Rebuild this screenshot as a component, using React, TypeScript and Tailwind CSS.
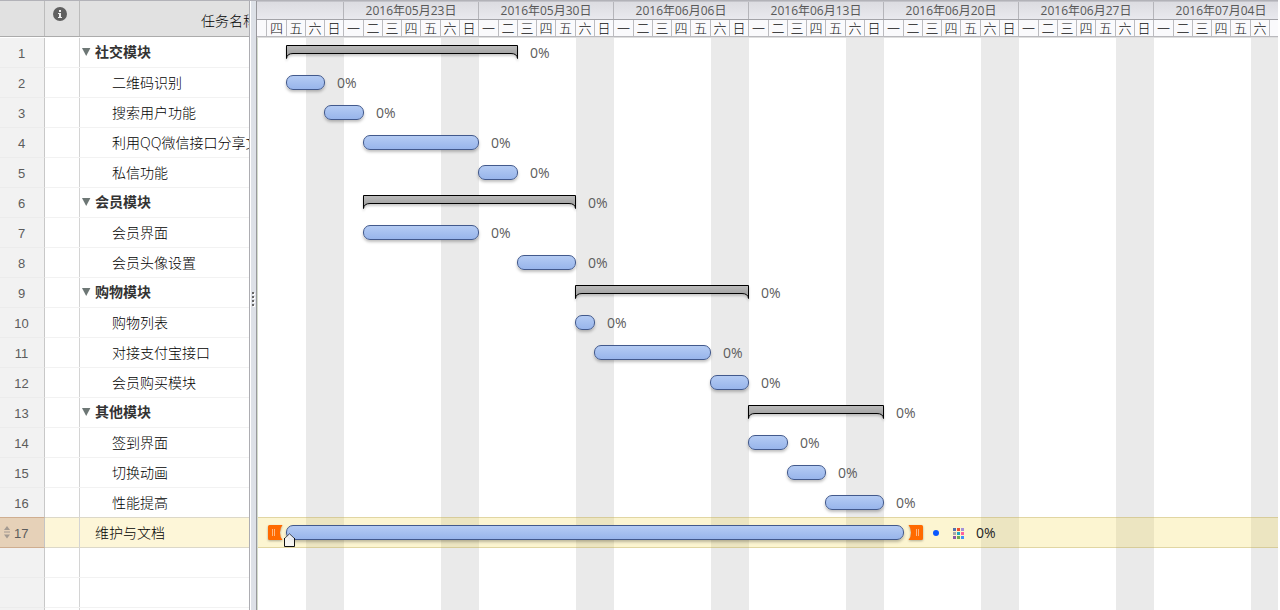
import React from 'react';

type Task = { name: string; kind: 'group' | 'task' | 'selected'; start: number; end: number };

const CHART_LEFT = 257;

const tasks: Task[] = [
  { name: '社交模块', kind: 'group', start: 286, end: 518 },
  { name: '二维码识别', kind: 'task', start: 286, end: 325 },
  { name: '搜索用户功能', kind: 'task', start: 324, end: 364 },
  { name: '利用QQ微信接口分享文章', kind: 'task', start: 363, end: 479 },
  { name: '私信功能', kind: 'task', start: 478, end: 518 },
  { name: '会员模块', kind: 'group', start: 363, end: 576 },
  { name: '会员界面', kind: 'task', start: 363, end: 479 },
  { name: '会员头像设置', kind: 'task', start: 517, end: 576 },
  { name: '购物模块', kind: 'group', start: 575, end: 749 },
  { name: '购物列表', kind: 'task', start: 575, end: 595 },
  { name: '对接支付宝接口', kind: 'task', start: 594, end: 711 },
  { name: '会员购买模块', kind: 'task', start: 710, end: 749 },
  { name: '其他模块', kind: 'group', start: 748, end: 884 },
  { name: '签到界面', kind: 'task', start: 748, end: 788 },
  { name: '切换动画', kind: 'task', start: 787, end: 826 },
  { name: '性能提高', kind: 'task', start: 825, end: 884 },
  { name: '维护与文档', kind: 'selected', start: 286, end: 904 },
];

const weeks = ['05月23日', '05月30日', '06月06日', '06月13日', '06月20日', '06月27日', '07月04日'];
const dayNames = ['一', '二', '三', '四', '五', '六', '日'];
const dayWidths = [20, 19, 19, 19, 20, 19, 19];

const days: { label: string; width: number }[] = [
  { label: '', width: 10 },
  { label: '四', width: 20 },
  { label: '五', width: 19 },
  { label: '六', width: 19 },
  { label: '日', width: 19 },
  ...weeks.flatMap(() => dayNames.map((label, i) => ({ label, width: dayWidths[i] }))).slice(0, -1),
];

function SummaryBar({ width }: { width: number }) {
  return (
    <svg width={width} height="16" className="mt-[7px] block shrink-0 overflow-visible drop-shadow-[0_2px_1px_rgba(0,0,0,0.2)]">
      <defs>
        <linearGradient id="summary" x1="0" x2="0" y1="0" y2="1">
          <stop offset="0" stopColor="#bcbcbc" />
          <stop offset="1" stopColor="#979797" />
        </linearGradient>
      </defs>
      <path
        d={`M.5 13.5V.5H${width - 0.5}V13.5Q${width - 1} 8.5 ${width - 7} 8.5H7Q1 8.5 .5 13.5Z`}
        fill="url(#summary)"
        stroke="#000"
      />
    </svg>
  );
}

function TaskBar({ width }: { width: number }) {
  return (
    <div
      className="mt-[7px] h-[15px] shrink-0 rounded-[7px] border border-[#42598c] bg-linear-to-b from-[#b4cbf3] to-[#98b5eb] shadow-[0_2px_3px_rgba(0,0,0,0.25)]"
      style={{ width }}
    />
  );
}

function Handle({ right }: { right?: boolean }) {
  return (
    <svg width="15" height="16" viewBox="0 0 15 16" className={right ? 'mt-[7px] shrink-0 -scale-x-100 drop-shadow-[0_1px_1px_rgba(0,0,0,0.3)]' : 'mt-[7px] shrink-0 drop-shadow-[0_1px_1px_rgba(0,0,0,0.3)]'}>
      <path d="M1.5 0H14.5Q12 3 12 7.5T14.5 15H1.5Q0 15 0 13.5V1.5Q0 0 1.5 0Z" fill="#ff6a00" />
      <path d="M4.5 4V11M6.5 4V11" stroke="#ffb680" />
    </svg>
  );
}

const dots = ['#5470b0', '#ef4e2e', '#a391d8', '#a9a9a9', '#24a6c4', '#ff609c', '#8b59a8', '#70a850', '#4290f8'];

function ColourGrid() {
  return (
    <div className="mt-[10px] grid h-[11px] w-[11px] shrink-0 grid-cols-3 gap-px">
      {dots.map((c) => (
        <i key={c} className="block h-[3px] w-[3px]" style={{ backgroundColor: c }} />
      ))}
    </div>
  );
}

function ChartRow({ task }: { task: Task }) {
  const width = task.end - task.start;
  const offset = task.start - CHART_LEFT;
  if (task.kind === 'selected') {
    return (
      <div className="relative -mt-px flex h-[31px] items-start border-y border-[#b8a75e]/40 bg-[#f2d53f]/24 pl-[11px]">
        <Handle />
        <div className="w-[3px] shrink-0" />
        <TaskBar width={width} />
        <svg width="12" height="15" className="absolute top-[15px] left-[27px]">
          <path d="M.5 13.5V5.5L5.5 .8L10.5 5.5V13.5Z" fill="#f5f5f5" fillOpacity=".9" />
          <path d="M.5 5.5L5.5 .8L10.5 5.5" fill="none" stroke="#111" strokeOpacity=".7" />
          <path d="M.5 5V13.5H10.5V5" fill="none" stroke="#111" />
        </svg>
        <div className="w-[4px] shrink-0" />
        <Handle right />
        <div className="mt-[12px] ml-[10px] h-[6px] w-[6px] shrink-0 rounded-full bg-[#0a58ff]" />
        <div className="ml-[14px]">
          <ColourGrid />
        </div>
        <span className="ml-[12px] text-[14px] leading-[30px] text-[#222]">0%</span>
      </div>
    );
  }
  return (
    <div className="flex h-[30px] items-start" style={{ paddingLeft: offset }}>
      {task.kind === 'group' ? <SummaryBar width={width} /> : <TaskBar width={width} />}
      <span className="ml-[12px] text-[14px] leading-[30px] text-[#5c5c5c]">0%</span>
    </div>
  );
}

function TableRow({ task, index }: { task?: Task; index?: number }) {
  const selected = task?.kind === 'selected';
  return (
    <div
      className={
        selected
          ? '-mt-px flex h-[31px] shrink-0 border-y border-[#dcd8c8] bg-[#fdf6d8]'
          : 'flex h-[30px] shrink-0 border-b border-[#f2f2f2]'
      }
    >
      <div
        className={
          selected
            ? '-my-px flex w-[45px] shrink-0 items-center border-y border-r border-y-[#cfae90] border-r-[#c4c4c4] bg-[#e6d1b8] pl-[4px]'
            : '-mb-px flex w-[45px] shrink-0 items-center justify-center border-r border-b border-r-[#c8c8c8] border-b-[#ececec] bg-[#f2f2f2] pr-px'
        }
      >
        {selected && (
          <svg width="7" height="13" className="mr-[3px]" fill="#a39a91">
            <path d="M3 0L6 4H0ZM0 5.5H6V6.5H0ZM0 8.5H6L3 12.5Z" />
          </svg>
        )}
        <span className="mt-px font-['Liberation_Sans',sans-serif] text-[13px] leading-none text-[#5c5c5c]">{index}</span>
      </div>
      <div className="w-[35px] shrink-0 border-r border-[#d4d4d4]" />
      <div className="flex min-w-0 flex-1 overflow-hidden whitespace-nowrap text-[14px] leading-[29px] text-[#333]">
        {task?.kind === 'group' && (
          <>
            <svg width="9" height="8" className="mt-[10px] ml-[2px] shrink-0">
              <path d="M0 0H8.4L4.2 8Z" fill="#6d7775" />
            </svg>
            <span className="ml-[4px] leading-[27px] font-bold">{task.name}</span>
          </>
        )}
        {task?.kind === 'task' && <span className="ml-[32px] font-light text-black">{task.name}</span>}
        {selected && <span className="ml-[15px] font-light text-black">{task?.name}</span>}
      </div>
    </div>
  );
}

export default function App() {
  return (
    <div className="h-[610px] w-[1280px] overflow-hidden bg-white font-['Open_Sans','Noto_Sans_CJK_SC',sans-serif]">
      <div className="flex h-full w-[1278px] overflow-hidden border-t border-[#b2b2b8]">
        <section className="flex w-[250px] shrink-0 flex-col overflow-hidden border-r border-[#adadb2]">
          <header className="flex h-[36px] shrink-0 border-b border-[#ababab] bg-[#e1e1e1]">
            <div className="w-[45px] shrink-0 border-r border-[#bcbcbc]" />
            <div className="flex w-[35px] shrink-0 justify-center border-r border-[#bcbcbc] pr-[4px]">
              <svg width="14" height="14" className="mt-[6px]">
                <circle cx="7" cy="7" r="7" fill="#606060" />
                <path d="M6 3H8V5H6ZM5 6H8V10H9V11H5V10H6V7H5Z" fill="#eee" />
              </svg>
            </div>
            <div className="min-w-0 flex-1 overflow-hidden pl-[121px] text-[14px] leading-[39px] font-light whitespace-nowrap text-black">任务名称</div>
          </header>
          <div className="h-px shrink-0" />
          {tasks.map((task, i) => (
            <TableRow key={task.name} task={task} index={i + 1} />
          ))}
          <TableRow />
          <TableRow />
          <TableRow />
        </section>

        <div className="flex w-[7px] shrink-0 flex-col items-center border-r border-l border-l-white border-r-[#98989c] bg-[#dde1e7] pt-[291px]">
          {[0, 1, 2, 3].map((i) => (
            <i key={i} className="mr-px mb-[2px] block h-[2px] w-[2px] bg-[#666] shadow-[1px_1px_0_#fff]" />
          ))}
        </div>

        <section className="flex w-[1021px] shrink-0 flex-col overflow-hidden">
          <header className="shrink-0 border-b border-[#b9b9bd]">
            <div className="flex h-[19px] border-t border-b border-t-[#c4c4ca] border-b-[#a3a3a8] bg-linear-to-b from-[#dcdce1] to-[#e9e9ee]">
              <div className="w-[87px] shrink-0 border-r border-[#b5b5ba]" />
              {weeks.map((w) => (
                <div key={w} className="w-[135px] shrink-0 border-r border-[#b5b5ba] text-center text-[12px] leading-[18px] whitespace-nowrap text-[#585858]">
                  2016年{w}
                </div>
              ))}
            </div>
            <div className="flex h-[16px] bg-[#fafafc]">
              {days.map((d, i) => (
                <div key={i} className="shrink-0 border-r border-[#bcbcc0] text-center text-[13px] leading-[16px] font-light text-[#111]" style={{ width: d.width }}>
                  {d.label}
                </div>
              ))}
            </div>
          </header>
          <div className="relative flex-1 overflow-hidden border-t border-l border-t-[#dedede] border-l-[#d3dccd]">
            <div className="absolute inset-y-0 -left-px flex">
              <div className="ml-[49px] w-[38px] bg-[#eaeaea]" />
              {weeks.map((w) => (
                <div key={w} className="ml-[97px] w-[38px] bg-[#eaeaea]" />
              ))}
            </div>
            <div className="relative -ml-px">
              {tasks.map((task) => (
                <ChartRow key={task.name} task={task} />
              ))}
            </div>
          </div>
        </section>
      </div>
    </div>
  );
}
